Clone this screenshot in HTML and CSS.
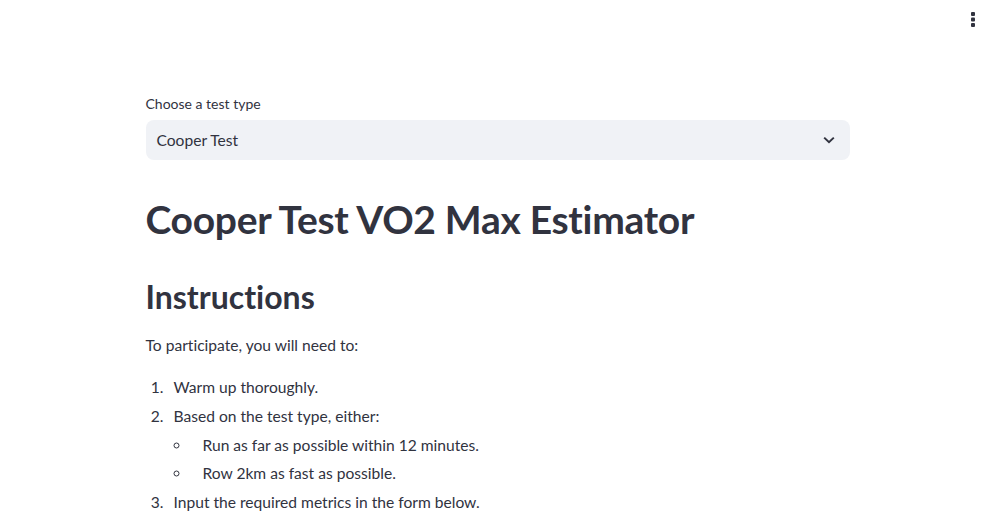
FILE: index.html
```html
<!DOCTYPE html>
<html>
<head>
<meta charset="utf-8">
<link rel="stylesheet" href="styles.css">
</head>
<body>
<header class="topbar">
  <button class="menu" aria-label="Main menu">
    <svg width="4" height="16" viewBox="0 0 4 16"><rect x="0" y="1" width="4" height="4" rx="1" fill="#31333f"/><rect x="0" y="6.5" width="4" height="4" rx="1" fill="#31333f"/><rect x="0" y="12" width="4" height="4" rx="1" fill="#31333f"/></svg>
  </button>
</header>
<main class="container">
  <div class="field">
    <label class="label">Choose a test type</label>
    <div class="select">
      <span>Cooper Test</span>
      <svg class="chev" width="16" height="16" viewBox="0 0 16 16"><path d="M3.2 5.6 L8 10.2 L12.8 5.6" fill="none" stroke="#31333f" stroke-width="2"/></svg>
    </div>
  </div>
  <h1>Cooper Test VO2 Max Estimator</h1>
  <h2>Instructions</h2>
  <p>To participate, you will need to:</p>
  <ol>
    <li>Warm up thoroughly.</li>
    <li>Based on the test type, either:
      <ul>
        <li>Run as far as possible within 12 minutes.</li>
        <li>Row 2km as fast as possible.</li>
      </ul>
    </li>
    <li>Input the required metrics in the form below.</li>
  </ol>
</main>
</body>
</html>
```
FILE: styles.css
```css
html, body {
  margin: 0;
  padding: 0;
  background: #fff;
  color: #31333f;
  font-family: "Lato", "Noto Sans", sans-serif;
  font-variant-ligatures: none;
  overflow: hidden;
  height: 531px;
}
.topbar {
  height: 0;
  position: relative;
}
.menu {
  position: absolute;
  top: 11px;
  right: 20px;
  border: 0;
  background: none;
  padding: 0;
  width: 4px;
  height: 16px;
}
.container {
  width: 704px;
  margin: 0 auto;
  padding-top: 96px;
}
.field {
  display: flex;
  flex-direction: column;
}
.label {
  font-size: 14px;
  line-height: 16px;
  height: 16px;
  margin-bottom: 8px;
}
.select {
  height: 40px;
  background: #f0f2f6;
  border-radius: 8px;
  display: flex;
  align-items: center;
  justify-content: space-between;
  padding: 0 13px 0 11px;
  font-size: 15.6px;
}
.chev { display: block; }
h1 {
  font-size: 39px;
  font-weight: 700;
  line-height: 52px;
  margin: 33px 0 0;
  letter-spacing: -0.3px;
}
h2 {
  font-size: 32px;
  font-weight: 700;
  line-height: 44px;
  margin: 30px 0 0;
}
p {
  font-size: 15.6px;
  line-height: 26px;
  margin: 13px 0 0;
}
ol {
  margin: 17px 0 0;
  padding-left: 22px;
  font-size: 15.6px;
}
li {
  line-height: 25.6px;
  margin: 3.2px 0 0;
}
ol > li { padding-left: 6px; }
ul {
  margin: 0;
  padding-left: 17px;
  list-style-type: circle;
}
ul > li { padding-left: 12px; }
```
